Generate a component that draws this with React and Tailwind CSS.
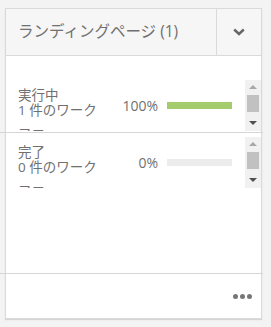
const ROWS = [
  { label: '実行中', count: '1 件のワークフロー', percent: 100, color: 'bg-[#a4cc6c]' },
  { label: '完了', count: '0 件のワークフロー', percent: 0, color: 'bg-[#a4cc6c]' },
]

function FakeScrollbar() {
  return (
    <div className="flex h-full w-[16px] shrink-0 flex-col bg-[#f1f1f1]">
      <div className="flex h-[14px] items-center justify-center">
        <div className="h-0 w-0 border-x-[4px] border-b-[4px] border-x-transparent border-b-[#a8a8a8]" />
      </div>
      <div className="mx-[2px] mt-[1px] h-[17px] bg-[#c1c1c1]" />
      <div className="flex-1" />
      <div className="flex h-[16px] items-center justify-center">
        <div className="h-0 w-0 border-x-[4px] border-t-[4px] border-x-transparent border-t-[#505050]" />
      </div>
    </div>
  )
}

function StatusRow({ row }) {
  return (
    <div className="flex h-[51px]">
      <div className="flex flex-1 overflow-hidden">
        {/* Label + count, clipped by the row */}
        <div className="w-[94px] shrink-0 pl-[12px] pt-[8px] text-[13.5px] text-[#707070]">
          <div className="leading-[14px]">{row.label}</div>
          <div className="-mt-[4px] w-[82px] leading-[24px]">{row.count}</div>
        </div>
        <div className="flex flex-1 items-center self-center">
          <span className="flex-1 text-right text-[14px] text-[#707070]">{row.percent}%</span>
          <div className="ml-[9px] mr-[13px] h-[7px] w-[65px] bg-[#ececec]">
            <div className={`h-full ${row.color}`} style={{ width: `${row.percent}%` }} />
          </div>
        </div>
      </div>
      <FakeScrollbar />
    </div>
  )
}

export default function App() {
  return (
    <div className="h-[327px] w-[271px] bg-[#f3f3f3] pl-[5px] pt-[8px] font-['Open_Sans','Noto_Sans_CJK_JP',sans-serif]">
      <div className="flex h-[311px] w-[257px] flex-col border border-[#dadada] bg-white shadow-[0_1px_1px_rgba(0,0,0,0.12)]">
        {/* Header */}
        <div className="flex h-[47px] shrink-0 border-b border-[#dadada] bg-[#f6f6f6]">
          <div className="flex flex-1 items-center pl-[12px] text-[15.5px] text-[#707070]">
            ランディングページ (1)
          </div>
          <div className="flex w-[45px] items-center justify-center border-l border-[#dadada]">
            <svg width="12" height="8" viewBox="0 0 12 8" fill="none">
              <path d="M1.2 1.5 L6 6 L10.8 1.5" stroke="#666" strokeWidth="2.4" />
            </svg>
          </div>
        </div>

        {/* Body */}
        <div className="flex-1 pt-[24px]">
          <StatusRow row={ROWS[0]} />
          <div className="-ml-[6px] mt-[1px] h-px w-[263px] bg-[#d6d6d6]" />
          <div className="mt-[4px]">
            <StatusRow row={ROWS[1]} />
          </div>
        </div>

        {/* Footer */}
        <div className="-ml-[6px] h-px w-[263px] bg-[#d6d6d6]" />
        <div className="flex h-[44px] shrink-0 items-center justify-end gap-[2px] pr-[9px]">
          <span className="h-[5px] w-[5px] rounded-full bg-[#777]" />
          <span className="h-[5px] w-[5px] rounded-full bg-[#777]" />
          <span className="h-[5px] w-[5px] rounded-full bg-[#777]" />
        </div>
      </div>
    </div>
  )
}
